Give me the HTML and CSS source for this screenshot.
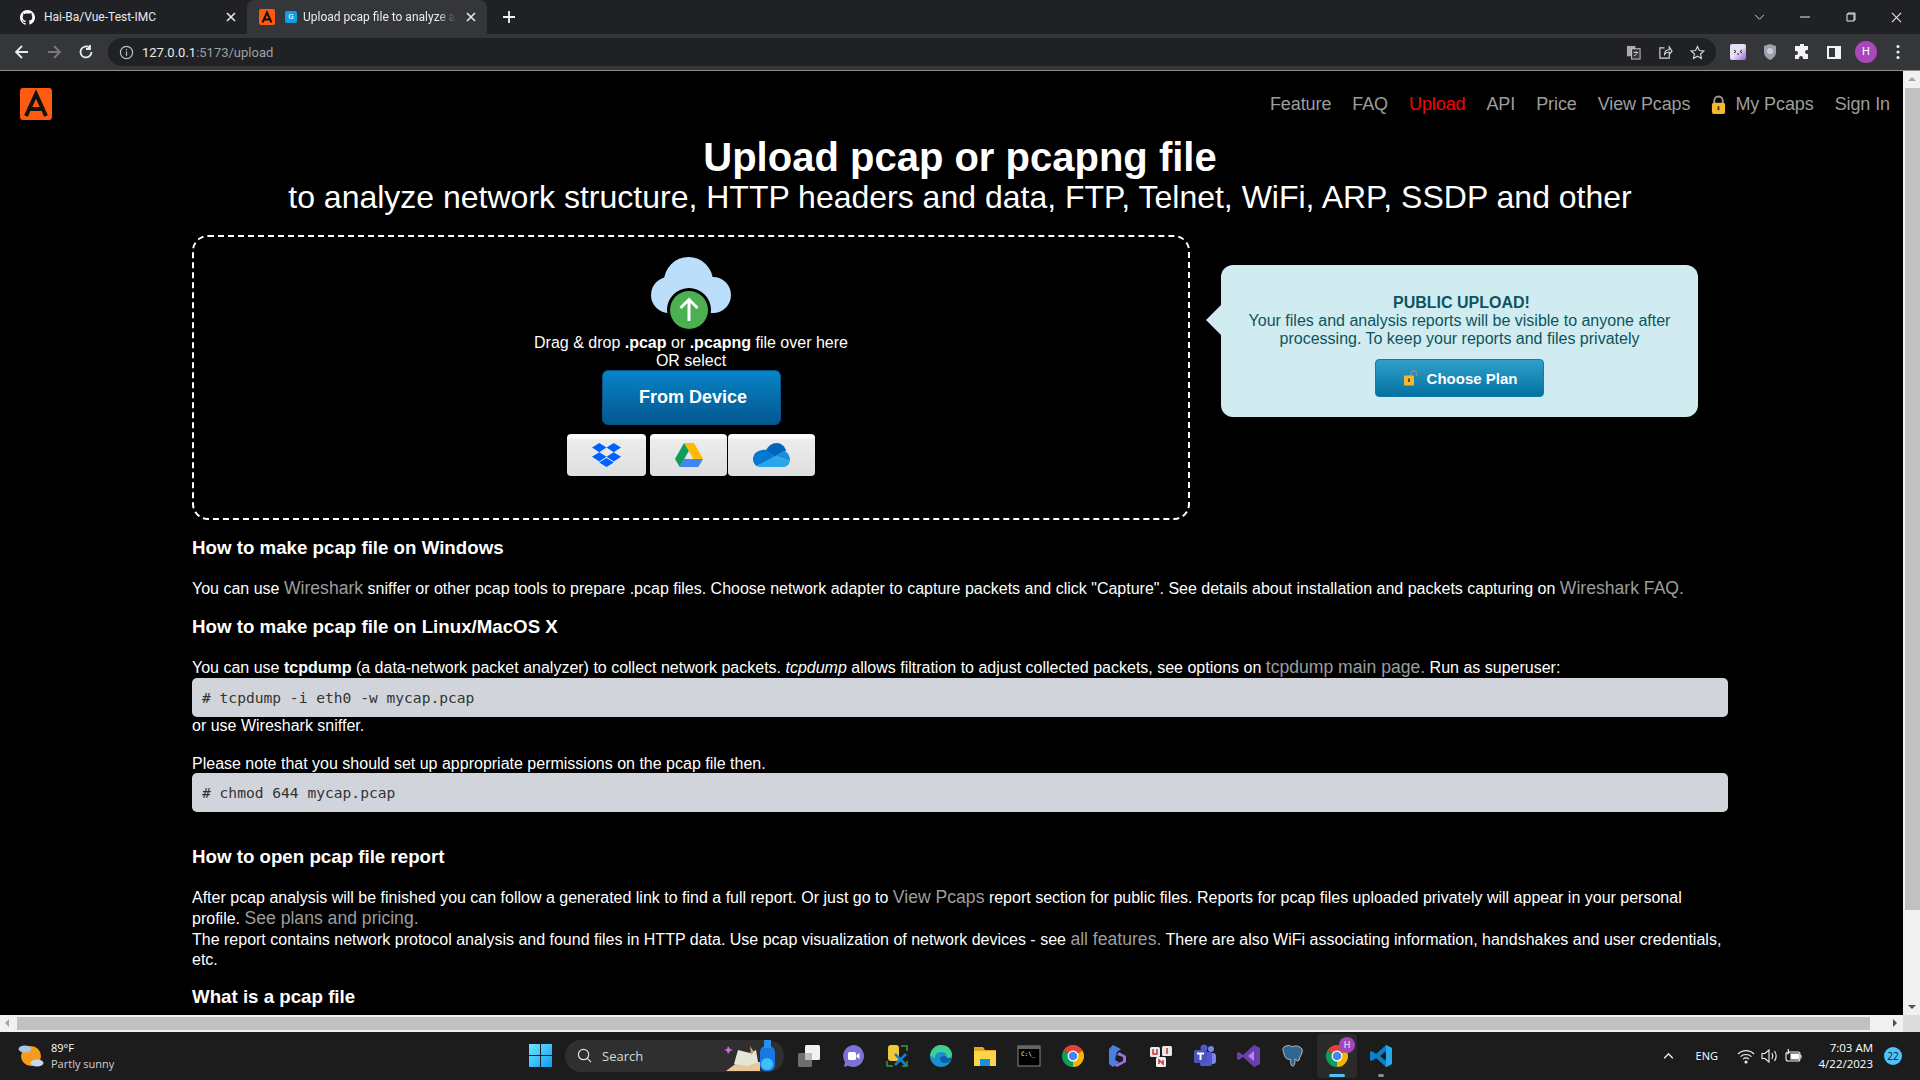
FILE: index.html
```html
<!DOCTYPE html>
<html lang="en">
<head>
<meta charset="utf-8">
<title>Upload pcap file to analyze</title>
<link rel="stylesheet" href="styles.css">
</head>
<body>
<div class="screen">
  <div class="tabbar">
    <div class="tab">
      <svg class="fav-gh" viewBox="0 0 16 16"><path fill="#fff" d="M8 0C3.6 0 0 3.6 0 8c0 3.5 2.3 6.5 5.5 7.6.4.1.5-.2.5-.4v-1.4c-2.2.5-2.7-1-2.7-1-.4-.9-.9-1.200-.9-1.200-.7-.5.100-.5.100-.5.800.1 1.200.8 1.200.8.700 1.200 1.900.9 2.300.7.100-.5.300-.9.500-1.100-1.800-.2-3.600-.9-3.600-4 0-.9.300-1.600.800-2.100-.1-.2-.4-1 .1-2.100 0 0 .7-.2 2.200.8.600-.2 1.300-.3 2-.3s1.400.1 2 .3c1.500-1 2.200-.8 2.200-.8.400 1.100.2 1.900.1 2.100.5.600.8 1.300.8 2.100 0 3.100-1.900 3.700-3.700 3.900.3.300.6.800.6 1.500v2.200c0 .2.100.5.600.4C13.700 14.500 16 11.500 16 8c0-4.400-3.600-8-8-8z"/></svg>
      <span class="tab-title">Hai-Ba/Vue-Test-IMC</span>
      <svg class="tab-x" viewBox="0 0 10 10"><path d="M1 1l8 8M9 1l-8 8"/></svg>
    </div>
    <div class="tab tab-active">
      <svg class="fav-a" viewBox="0 0 32 32"><rect width="32" height="32" rx="4" fill="#ff5a0f"/><path d="M7 27 16 7l9 20M10.500 21h11" fill="none" stroke="#111" stroke-width="4"/></svg>
      <span class="fav-blue">G</span>
      <span class="tab-title tab-fade">Upload pcap file to analyze a</span>
      <svg class="tab-x" viewBox="0 0 10 10"><path d="M1 1l8 8M9 1l-8 8"/></svg>
    </div>
    <svg class="tab-plus" viewBox="0 0 12 12"><path d="M6 0v12M0 6h12"/></svg>
    <div class="win-ctrl">
      <svg class="wc wc-v" viewBox="0 0 12 8"><path d="M1 1l5 5 5-5"/></svg>
      <svg class="wc wc-min" viewBox="0 0 10 10"><path d="M0 5h10"/></svg>
      <svg class="wc wc-max" viewBox="0 0 10 10"><path d="M2 2V1h7v7H8M1 2h7v7H1z"/></svg>
      <svg class="wc wc-close" viewBox="0 0 12 12"><path d="M1 1l10 10M11 1L1 11"/></svg>
    </div>
  </div>
  <div class="toolbar">
    <svg class="tb-ic" viewBox="0 0 16 16"><path d="M14 8H2M8 2L2 8l6 6"/></svg>
    <svg class="tb-ic tb-dim" viewBox="0 0 16 16"><path d="M2 8h12M8 2l6 6-6 6"/></svg>
    <svg class="tb-ic" viewBox="0 0 16 16"><path d="M13.500 8A5.500 5.500 0 1 1 11.500 3.700M12 1v4H8"/></svg>
    <div class="omnibox">
      <svg class="info" viewBox="0 0 16 16"><circle cx="8" cy="8" r="6.500"/><path d="M8 7v4.500M8 4.200v1.300"/></svg>
      <span class="url"><b>127.0.0.1</b>:5173/upload</span>
      <div class="omni-right">
        <svg class="om-ic" viewBox="0 0 16 16"><rect x="1" y="1" width="9" height="11" fill="#aaa"/><rect x="6" y="4" width="9" height="11" fill="#35363a" stroke="#ccc"/><path d="M8 8h5M10.500 6.500V8M12 8c-.5 2-2 3-3.500 3.500" stroke="#ccc" fill="none"/></svg>
        <svg class="om-ic om-stroke" viewBox="0 0 16 16"><path d="M7 3H2v11h10V9M7 10c0-3 2-5 5-5V2l3 4.500L12 10V7.500c-2 0-4 1-5 2.500z"/></svg>
        <svg class="om-ic om-stroke" viewBox="0 0 16 16"><path d="M8 1.500l2 4.400 4.800.5-3.600 3.200 1 4.700L8 11.900l-4.200 2.400 1-4.700L1.200 6.400 6 5.900z"/></svg>
      </div>
    </div>
    <div class="ext">
      <svg class="ext-ic" viewBox="0 0 16 16"><defs><linearGradient id="extg" x1="0" y1="0" x2="1" y2="1"><stop offset="0.500" stop-color="#e4e0f5"/><stop offset="1" stop-color="#9a5fe0"/></linearGradient></defs><rect width="16" height="16" rx="2" fill="url(#extg)"/><path d="M4 6l2 1.500L4 9M12 6l-2 1.500L12 9M7 10h2" stroke="#222" fill="none"/></svg>
      <svg class="ext-ic" viewBox="0 0 16 16"><path d="M8 0l6 2v6c0 4-3 6.500-6 8-3-1.500-6-4-6-8V2z" fill="#9aa3ad"/><circle cx="8" cy="7" r="3" fill="#c9d0d6"/></svg>
      <svg class="ext-ic" viewBox="0 0 16 16"><path fill="#f1f3f4" d="M6 1a2 2 0 0 1 4 0v1h4v4h-1a2 2 0 0 0 0 4h1v5H9v-1a2 2 0 0 0-4 0v1H1v-4h1a2 2 0 0 0 0-4H1V2h5z"/></svg>
      <svg class="ext-ic" viewBox="0 0 16 16"><path fill="#f1f3f4" d="M1 2h14v13H1zM3 4v9h6V4z"/></svg>
      <span class="avatar">H</span>
      <svg class="ext-ic" viewBox="0 0 16 16"><circle cx="8" cy="2.500" r="1.600" fill="#e8eaed"/><circle cx="8" cy="8" r="1.600" fill="#e8eaed"/><circle cx="8" cy="13.500" r="1.600" fill="#e8eaed"/></svg>
    </div>
  </div>

  <div class="viewport">
    <div class="page">
      <nav class="nav">
        <svg class="logo" viewBox="0 0 32 32"><rect width="32" height="32" rx="3" fill="#ff5a0f"/><path d="M6 28 16 6l10 22M10 21h12" fill="none" stroke="#111" stroke-width="4"/></svg>
        <ul class="menu">
          <li><a>Feature</a></li>
          <li><a>FAQ</a></li>
          <li><a class="on">Upload</a></li>
          <li><a>API</a></li>
          <li><a>Price</a></li>
          <li><a>View Pcaps</a></li>
          <li><a class="with-lock"><svg class="lock" viewBox="0 0 16 20"><path d="M3.500 9V6a4.500 4.500 0 0 1 9 0v3" fill="none" stroke="#9a9a9a" stroke-width="2"/><rect x="1" y="8" width="14" height="12" rx="2" fill="#f5b82e"/><rect x="7" y="12" width="2" height="4" fill="#333"/></svg>My Pcaps</a></li>
          <li><a>Sign In</a></li>
        </ul>
      </nav>
      <main class="content">
        <h1 class="title">Upload pcap or pcapng file</h1>
        <h2 class="subtitle">to analyze network structure, HTTP headers and data, FTP, Telnet, WiFi, ARP, SSDP and other</h2>
        <div class="upload-row">
          <div class="dropzone">
            <svg class="cloud" viewBox="0 0 80 73"><g fill="#bbdefb"><circle cx="37.500" cy="24.500" r="24.500"/><circle cx="18" cy="38" r="18"/><circle cx="62" cy="38" r="18"/><rect x="18" y="38" width="44" height="18"/></g><circle cx="38" cy="53" r="22" fill="#000"/><circle cx="38" cy="53" r="19" fill="#4caf50"/><path d="M38 64V43M29.500 51l8.500-8.500 8.500 8.500" fill="none" stroke="#fff" stroke-width="3"/></svg>
            <div class="drop-text drop-first">Drag &amp; drop <b>.pcap</b> or <b>.pcapng</b> file over here</div>
            <div class="drop-text">OR select</div>
            <button class="btn-device">From Device</button>
            <div class="sources">
              <button class="src src-a"><svg class="ic-db" viewBox="0 0 29 24"><path fill="#0061ff" d="M7.250 0l7.250 4.600-7.250 4.600L0 4.600zM21.750 0L29 4.600l-7.250 4.600-7.250-4.600zM7.250 9.200l7.250 4.600-7.250 4.600L0 13.800zM21.750 9.200L29 13.800l-7.250 4.600-7.250-4.600zM14.500 15l7.250 4.600L14.500 24l-7.250-4.400z"/></svg></button>
              <button class="src src-b"><svg class="ic-gd" viewBox="0 0 28 24"><path fill="#ffba00" d="M9 0h10l9 16h-9.500z"/><path fill="#0f9d58" d="M9 0l4.800 8-9.100 16L0 16z"/><path fill="#4285f4" d="M9 16h19l-4.700 8H4.700z"/></svg></button>
              <button class="src src-c"><svg class="ic-od" viewBox="0 0 37 24"><path fill="#0364b8" d="M13 7.500C15 3 19 0 23.500 0 28 0 32 3 33 8L22 14z"/><path fill="#0078d4" d="M14 7C8 5.500 0 9 0 16c0 3 1.500 5.500 3.500 7L22 14.500z"/><path fill="#1490df" d="M22 13l8-5c4 0 7 4 7 10z"/><path fill="#28a8ea" d="M3.500 23L22 13l15 5c-1 3.500-3 6-7 6H8c-2 0-3.500-.3-4.500-1z"/></svg></button>
            </div>
          </div>
          <aside class="callout">
            <div class="call-head">PUBLIC UPLOAD!</div>
            <div>Your files and analysis reports will be visible to anyone after processing. To keep your reports and files privately</div>
            <button class="btn-plan"><svg class="lock-open" viewBox="0 0 14 16"><path d="M7 6V3.500a2.800 2.800 0 0 1 5.600 0V6" fill="none" stroke="#8a8a8a" stroke-width="1.500"/><rect y="5.500" width="10" height="10" rx="1" fill="#f5b82e"/><rect x="4.200" y="8.500" width="1.600" height="3.500" fill="#333"/></svg>Choose Plan</button>
          </aside>
        </div>
        <h3 class="sec sec-1">How to make pcap file on Windows</h3>
        <p class="para p-1">You can use <a>Wireshark</a> sniffer or other pcap tools to prepare .pcap files. Choose network adapter to capture packets and click "Capture". See details about installation and packets capturing on <a>Wireshark FAQ.</a></p>
        <h3 class="sec sec-2">How to make pcap file on Linux/MacOS X</h3>
        <p class="para p-2">You can use <b>tcpdump</b> (a data-network packet analyzer) to collect network packets. <i>tcpdump</i> allows filtration to adjust collected packets, see options on <a>tcpdump main page.</a> Run as superuser:</p>
        <pre class="code"># tcpdump -i eth0 -w mycap.pcap</pre>
        <p class="para p-3">or use Wireshark sniffer.</p>
        <p class="para p-4">Please note that you should set up appropriate permissions on the pcap file then.</p>
        <pre class="code"># chmod 644 mycap.pcap</pre>
        <h3 class="sec sec-3">How to open pcap file report</h3>
        <p class="para p-5">After pcap analysis will be finished you can follow a generated link to find a full report. Or just go to <a>View Pcaps</a> report section for public files. Reports for pcap files uploaded privately will appear in your personal profile. <a>See plans and pricing.</a><br>The report contains network protocol analysis and found files in HTTP data. Use pcap visualization of network devices - see <a>all features.</a> There are also WiFi associating information, handshakes and user credentials, etc.</p>
        <h3 class="sec sec-4">What is a pcap file</h3>
      </main>
    </div>
    <div class="vscroll">
      <span class="arrow-up"></span>
      <span class="v-thumb"></span>
      <span class="arrow-down"></span>
    </div>
  </div>
  <div class="hscroll">
    <span class="arrow-left"></span>
    <span class="h-thumb"></span>
    <span class="arrow-right"></span>
    <span class="corner"></span>
  </div>

  <footer class="taskbar">
    <div class="weather">
      <svg class="wx" viewBox="0 0 26 26"><circle cx="13" cy="13" r="10" fill="#f39a1f"/><ellipse cx="7" cy="6" rx="6.500" ry="3.500" fill="#a9c6e8"/><ellipse cx="19" cy="20" rx="6.500" ry="3.500" fill="#c5d8ee"/></svg>
      <div class="wx-text"><div class="wx-t">89°F</div><div class="wx-d">Partly sunny</div></div>
    </div>
    <svg class="start" viewBox="0 0 24 24"><defs><linearGradient id="wing" x1="0" y1="0" x2="1" y2="1"><stop offset="0" stop-color="#6ee6ff"/><stop offset="1" stop-color="#0f9bf5"/></linearGradient></defs><path fill="url(#wing)" d="M0 0h11.500v11.500H0zM12.500 0H24v11.500H12.500zM0 12.500h11.500V24H0zM12.500 12.500H24V24H12.500z"/></svg>
    <div class="search">
      <svg class="s-ic" viewBox="0 0 16 16"><circle cx="7" cy="7" r="5.500"/><path d="M11 11l4 4"/></svg>
      <span>Search</span>
      <svg class="s-art" viewBox="0 0 56 34"><path d="M2 33L14 24h22v9z" fill="#e8c79a"/><path d="M10 26L14 12l12 3 6-3 2 12-10 4z" fill="#e6e6d8"/><path d="M26 8l4 6-3 3z" fill="#d0a060"/><rect x="36" y="8" width="15" height="25" rx="6" fill="#1a78e6"/><rect x="40" y="2" width="7" height="8" fill="#2a90f0"/><circle cx="43" cy="26" r="6" fill="#3cc0f5"/><path d="M4 8l2 3 3 1-3 1-2 3-1-3-3-1 3-1z" fill="#d070e0"/></svg>
    </div>
    <div class="apps">
      <span class="app"><svg class="a-ic" viewBox="0 0 24 24"><rect x="8" y="1" width="15" height="15" rx="1.500" fill="#f2f2f2"/><rect x="1" y="9" width="14" height="14" rx="1.500" fill="#6e6e6e"/><rect x="8" y="9" width="7" height="7" fill="#bdbdbd"/></svg></span>
      <span class="app"><svg class="a-ic" viewBox="0 0 24 24"><path fill="#7b73d6" d="M12 1a11 11 0 1 1-5 20.800L3 23l1-5A11 11 0 0 1 12 1z"/><rect x="7" y="8" width="8" height="8" rx="1.500" fill="#fff"/><path d="M15.500 11l3-2v6l-3-2z" fill="#fff"/></svg></span>
      <span class="app"><svg class="a-ic" viewBox="0 0 24 24"><rect x="3" y="1" width="11" height="16" rx="3" fill="#f0c93a"/><path d="M10 10l11 11M21 10L10 21" stroke="#1a7fc8" stroke-width="2.500"/><path d="M16 2h6v5M2 17v5h6M22 17v5h-5" fill="none" stroke="#3a9a3a" stroke-width="1.500"/></svg></span>
      <span class="app"><svg class="a-ic" viewBox="0 0 24 24"><circle cx="12" cy="12" r="11" fill="#1b8fd0"/><path d="M23 12c0 4-3 7-7 7-3 0-5-2-5-4s2-3 4-3 3 1 3 2h5z" fill="#0b5ea8"/><path d="M1 12C2 5 7 1 12 1c6 0 11 4 11 10 0 2-2 3-5 3 0-4-2-6-6-6-5 0-6 4-6 6" fill="#3ecf8e"/></svg></span>
      <span class="app"><svg class="a-ic" viewBox="0 0 24 24"><path fill="#e0a81c" d="M1 3h9l2 3h11v16H1z"/><path fill="#fbd448" d="M1 7h22v15H1z"/><rect x="7" y="15" width="10" height="7" fill="#1a8fdc"/></svg></span>
      <span class="app"><svg class="a-ic" viewBox="0 0 24 24"><rect x="1" y="2" width="22" height="20" fill="#000" stroke="#888"/><rect x="1" y="2" width="22" height="3" fill="#666"/><text class="cmd" x="4" y="12">C:\_</text></svg></span>
      <span class="app"><svg class="a-ic" viewBox="0 0 24 24"><path fill="#db4437" d="M12 12L2.470 6.500A11 11 0 0 1 21.530 6.500z"/><path fill="#f4b400" d="M12 12l9.530-5.500A11 11 0 0 1 12 23z"/><path fill="#0f9d58" d="M12 12v11A11 11 0 0 1 2.470 6.500z"/><circle cx="12" cy="12" r="5.500" fill="#fff"/><circle cx="12" cy="12" r="4.300" fill="#4285f4"/></svg></span>
      <span class="app"><svg class="a-ic" viewBox="0 0 24 24"><path fill="#4a7fe0" d="M8 1l8 4-4 3-2 8 4 2-6 5-4-3V5z"/><path fill="#9f6fe0" d="M14 8l7 4v6l-9 5-3-2 9-4v-4l-6-2z"/></svg></span>
      <span class="app"><svg class="a-ic" viewBox="0 0 24 24"><rect x="1" y="3" width="10" height="10" rx="1.500" fill="#e8e8e8"/><rect x="13" y="2" width="10" height="10" rx="1.500" fill="#e8e8e8"/><rect x="7" y="13" width="10" height="10" rx="1.500" fill="#f2f2f2"/><path d="M4 5v5h4V5M18 4v6M10 20v-4l4 4v-4" fill="none" stroke="#c33" stroke-width="1.500"/></svg></span>
      <span class="app"><svg class="a-ic" viewBox="0 0 24 24"><circle cx="18" cy="5" r="3" fill="#7b83eb"/><rect x="14" y="9" width="9" height="11" rx="3" fill="#7b83eb"/><circle cx="11" cy="4" r="3.500" fill="#5059c9"/><rect x="7" y="8" width="12" height="14" rx="2" fill="#5059c9"/><rect x="1" y="6" width="13" height="13" rx="1.500" fill="#4b53bc"/><path d="M4 9.500h7M7.500 9.500V16" stroke="#fff" stroke-width="2"/></svg></span>
      <span class="app"><svg class="a-ic" viewBox="0 0 24 24"><path fill="#6a3fb0" d="M17 1l6 3v16l-6 3L6 13l-4 3-2-1V9l2-1 4 3z"/><path fill="#b18bea" d="M17 7v10l-6-5z"/></svg></span>
      <span class="app"><svg class="a-ic" viewBox="0 0 24 24"><path fill="#2f6792" stroke="#ddd" stroke-width=".8" d="M3 3c3-2 6-2 8 0 3-2 8-1 10 2 1 3-1 6-2 8-1 1 0 3-2 4-2 0-2-2-3-2 0 3 0 7-2 7-3 0-2-4-3-7-3 1-5-1-6-5S1 5 3 3z"/></svg></span>
      <span class="app app-active"><svg class="a-ic" viewBox="0 0 24 24"><path fill="#db4437" d="M12 12L2.470 6.500A11 11 0 0 1 21.530 6.500z"/><path fill="#f4b400" d="M12 12l9.530-5.500A11 11 0 0 1 12 23z"/><path fill="#0f9d58" d="M12 12v11A11 11 0 0 1 2.470 6.500z"/><circle cx="12" cy="12" r="5.500" fill="#fff"/><circle cx="12" cy="12" r="4.300" fill="#4285f4"/></svg><span class="app-badge">H</span><span class="run-bar"></span></span>
      <span class="app"><svg class="a-ic" viewBox="0 0 24 24"><path fill="#0a7fcb" d="M17 1l6 3v16l-6 3-10-9-4 3-2-1V8l2-1 4 3z"/><path fill="#25a7ea" d="M17 1l6 3v16l-6 3z"/><path fill="#1c1c1c" d="M17 7v10l-6-5z"/></svg><span class="run-dot"></span></span>
    </div>
    <div class="tray">
      <svg class="tr-chev" viewBox="0 0 12 7"><path d="M1 6l5-5 5 5"/></svg>
      <span class="eng">ENG</span>
      <svg class="tr-ic" viewBox="0 0 18 16"><path d="M1 6c4.500-4.500 11.500-4.500 16 0M3.500 8.700c3-3 8-3 11 0M6 11.200c1.800-1.600 4.200-1.600 6 0"/><circle cx="9" cy="14" r="1" fill="#fff"/></svg>
      <svg class="tr-ic" viewBox="0 0 18 16"><path d="M1 5.500h3L8 2v12l-4-3.500H1zM11 5c1 2 1 4 0 6M13.500 3c2 3 2 7 0 10"/></svg>
      <svg class="tr-ic" viewBox="0 0 18 16"><rect x="1" y="4" width="14" height="9" rx="2"/><path d="M16 7v3"/><rect x="6" y="6" width="8" height="5" fill="#fff"/><path d="M3 1l1 4-2 1"/></svg>
      <div class="clock"><div>7:03 AM</div><div>4/22/2023</div></div>
      <span class="notif">22</span>
    </div>
  </footer>
</div>
</body>
</html>
```

FILE: styles.css
```css
* { box-sizing: border-box; }
html, body { margin: 0; padding: 0; height: 100%; overflow: hidden; background: #000; }
body { font-family: "Liberation Sans", Arial, sans-serif; font-size: 16px; color: #fff; }
.screen { display: flex; flex-direction: column; height: 1080px; width: 1920px; }

/* browser chrome */
.tabbar { height: 34px; background: #202124; display: flex; align-items: flex-end; font-family: Roboto, sans-serif; font-size: 12px; color: #e8eaed; }
.tab { width: 247px; height: 34px; display: flex; align-items: center; padding-left: 20px; }
.tab-active { width: 240px; height: 34px; background: #35363a; border-radius: 8px 8px 0 0; padding-left: 12px; }
.fav-gh { width: 15px; height: 15px; margin-right: 9px; }
.fav-a { width: 16px; height: 16px; margin-right: 10px; }
.fav-blue { width: 12px; height: 12px; margin-right: 6px; border-radius: 2px; background: #0f9fe8; color: #fff; font-size: 8px; line-height: 12px; text-align: center; }
.tab-title { flex: 1; white-space: nowrap; overflow: hidden; }
.tab-fade { color: #e8eaed; -webkit-mask-image: linear-gradient(90deg, #000 88%, transparent); mask-image: linear-gradient(90deg, #000 88%, transparent); }
.tab-x { width: 10px; height: 10px; margin: 0 11px 0 10px; fill: none; stroke: #e8eaed; stroke-width: 1.600; flex: none; }
.tab-plus { width: 12px; height: 12px; margin: 0 0 11px 16px; fill: none; stroke: #f1f3f4; stroke-width: 1.800; }
.win-ctrl { margin-left: auto; height: 34px; display: flex; align-items: center; }
.wc { fill: none; stroke: #e8eaed; stroke-width: 1; flex: none; }
.wc-v { width: 11px; height: 7px; margin-right: 35px; }
.wc-min { width: 10px; height: 10px; margin-right: 36px; }
.wc-max { width: 10px; height: 10px; margin-right: 35px; }
.wc-close { width: 11px; height: 11px; margin-right: 18px; stroke-width: 1.200; }

.toolbar { height: 37px; background: #35363a; border-bottom: 1px solid #8d8e90; display: flex; align-items: center; padding-left: 14px; }
.tb-ic { width: 16px; height: 16px; margin-right: 16px; fill: none; stroke: #e8eaed; stroke-width: 1.800; flex: none; }
.tb-dim { stroke: #77787b; }
.tb-ic:nth-child(3) { margin-right: 14px; }
.omnibox { width: 1608px; height: 28px; background: #202124; border-radius: 14px; display: flex; align-items: center; padding: 0 11px; font-family: Roboto, sans-serif; font-size: 13px; color: #9aa0a6; }
.info { width: 15px; height: 15px; fill: none; stroke: #bdc1c6; stroke-width: 1.300; margin-right: 8px; }
.url b { font-weight: 400; color: #e8eaed; }
.omni-right { margin-left: auto; display: flex; gap: 17px; align-items: center; }
.om-ic { width: 15px; height: 15px; }
.om-stroke { fill: none; stroke: #d5d7da; stroke-width: 1.200; }
.ext { display: flex; align-items: center; margin-left: 14px; gap: 16px; }
.ext-ic { width: 16px; height: 16px; flex: none; }
.avatar { width: 22px; height: 22px; margin: 0 -3px; border-radius: 50%; background: #ab47bc; color: #fff; font-size: 11px; line-height: 22px; text-align: center; font-family: Roboto, sans-serif; }

/* page */
.viewport { flex: 1; display: flex; min-height: 0; }
.page { width: 1903px; overflow: hidden; background: #000; flex: none; }
.nav { height: 50px; display: flex; align-items: center; justify-content: space-between; padding: 16px 13px 0 20px; }
.logo { width: 32px; height: 32px; }
.menu { list-style: none; display: flex; margin: 0; padding: 0; font-size: 18px; letter-spacing: -0.1px; color: #9d9d9d; }
.menu li + li { margin-left: 21px; }
.menu .on { color: #f00; }
.with-lock { display: flex; align-items: center; }
.lock { width: 15px; height: 19px; margin-right: 9px; }
.content { width: 1536px; margin-left: 192px; }
.title { margin: 14px 0 0; font-size: 40px; line-height: 44px; font-weight: 700; text-align: center; }
.subtitle { margin: -1px 0 0; font-size: 32px; line-height: 38px; font-weight: 400; text-align: center; }
.upload-row { display: flex; align-items: flex-start; margin-top: 19px; }
.dropzone { width: 998px; height: 285px; border: 2px dashed #fff; border-radius: 16px; display: flex; flex-direction: column; align-items: center; padding-top: 20px; }
.cloud { width: 80px; height: 73px; margin-left: -1px; display: block; }
.drop-text { line-height: 18px; text-align: center; }
.drop-first { margin-top: 4px; }
.btn-device { width: 179px; height: 55px; margin-top: 0; padding-left: 10px; border: 1px solid #04558f; border-radius: 6px; background: linear-gradient(#0784c6, #04578f); color: #fff; font: 700 18px "Liberation Sans", Arial, sans-serif; }
.sources { display: flex; margin-top: 9px; }
.src { height: 42px; padding: 0; border: 0; border-radius: 4px; background: linear-gradient(#f5f5f5 0, #fff 3px, #ececec 6px, #dfdfdf); display: flex; align-items: center; justify-content: center; }
.src-a { width: 79px; margin-right: 4px; }
.src-b { width: 77px; margin-right: 1px; }
.src-c { width: 87px; }
.ic-db { width: 29px; height: 24px; }
.ic-gd { width: 28px; height: 24px; }
.ic-od { width: 37px; height: 24px; }
.callout { position: relative; width: 477px; height: 152px; margin: 30px 0 0 31px; padding: 29px 25px 0; background: #d1ecf1; border-radius: 12px; color: #0c5460; text-align: center; line-height: 18px; }
.callout::before { content: ""; position: absolute; left: -15px; top: 40px; border: 15px solid transparent; border-left: 0; border-right-color: #d1ecf1; }
.call-head { font-weight: 700; padding-left: 4px; }
.btn-plan { display: flex; align-items: center; justify-content: center; width: 169px; height: 38px; margin: 11px auto 0; padding-left: 8px; border: 1px solid #0b7eae; border-radius: 4px; background: linear-gradient(#2f9fcb, #04729e); color: #fff; font: 700 15px "Liberation Sans", Arial, sans-serif; }
.lock-open { width: 14px; height: 16px; margin-right: 9px; }
.sec { margin: 0; font-size: 18.720px; line-height: 24px; font-weight: 700; }
.para { margin: 0; line-height: 20px; }
.para a { color: #9d9d9d; font-size: 17.600px; }
.sec-1 { margin-top: 16px; }
.p-1 { margin-top: 18px; }
.sec-2 { margin-top: 16px; }
.p-2 { margin-top: 18px; }
.code { margin: 0; height: 39px; padding: 0 10px; background: #d1d5db; border-radius: 5px; color: #333; font: 14.600px/39px "DejaVu Sans Mono", monospace; }
.p-3 { line-height: 17px; }
.p-4 { margin-top: 20px; line-height: 19px; }
.sec-3 { margin-top: 33px; }
.p-5 { margin-top: 18px; }
.sec-4 { margin-top: 15px; }

.vscroll { width: 17px; background: #f1f1f1; position: relative; flex: none; }
.v-thumb { position: absolute; left: 2px; right: 0; top: 17px; height: 822px; background: #c1c1c1; }
.arrow-up, .arrow-down, .arrow-left, .arrow-right { position: absolute; width: 0; height: 0; border: 4px solid transparent; }
.arrow-up { left: 5px; top: 6px; border-bottom-color: #a3a3a3; border-top: 0; }
.arrow-down { left: 5px; bottom: 6px; border-top-color: #505050; border-bottom: 0; }

.hscroll { height: 17px; background: #f1f1f1; position: relative; flex: none; }
.h-thumb { position: absolute; left: 17px; top: 2px; bottom: 2px; width: 1853px; background: #c1c1c1; }
.arrow-left { left: 5px; top: 4px; border-right-color: #a3a3a3; border-left: 0; }
.arrow-right { left: 1893px; top: 4px; border-left-color: #505050; border-right: 0; }
.corner { position: absolute; left: 1903px; top: 0; width: 17px; height: 17px; background: #dcdcdc; }

/* taskbar */
.taskbar { height: 48px; padding-bottom: 1px; background: #1c1c1c; display: flex; align-items: center; font-family: "Open Sans", sans-serif; color: #fff; flex: none; }
.weather { width: 529px; display: flex; align-items: center; padding-left: 18px; flex: none; }
.wx { width: 26px; height: 26px; margin-right: 7px; }
.wx-text { font-size: 11px; line-height: 16px; }
.wx-d { color: #d0d0d0; }
.start { width: 23px; height: 23px; flex: none; }
.search { width: 219px; height: 32px; margin-left: 13px; background: #2f2f2f; border-radius: 16px; display: flex; align-items: center; padding-left: 12px; font-size: 13px; color: #d8d8d8; position: relative; flex: none; }
.s-ic { width: 15px; height: 15px; fill: none; stroke: #e0e0e0; stroke-width: 1.300; margin-right: 10px; }
.s-art { position: absolute; right: 4px; bottom: 0; width: 56px; height: 34px; }
.apps { display: flex; margin-left: 3px; flex: none; }
.app { width: 44px; height: 44px; display: flex; align-items: center; justify-content: center; position: relative; }
.a-ic { width: 24px; height: 24px; }
.cmd { font: 6px "DejaVu Sans Mono", monospace; fill: #fff; }
.app-active { background: #2a2a2a; border-radius: 4px; width: 40px; margin: 0 2px; }
.app-badge { position: absolute; right: 2px; top: 3px; width: 16px; height: 16px; border-radius: 50%; background: #a347ba; font-size: 9px; line-height: 16px; text-align: center; }
.run-bar { position: absolute; left: 12px; bottom: 1px; width: 16px; height: 3px; border-radius: 2px; background: #4cc2ff; }
.run-dot { position: absolute; left: 19px; bottom: 1px; width: 6px; height: 3px; border-radius: 2px; background: #8a8a8a; }
.tray { margin-left: auto; display: flex; align-items: center; flex: none; }
.tr-chev { width: 11px; height: 6px; fill: none; stroke: #f2f2f2; stroke-width: 1.600; margin-right: 22px; }
.eng { font-size: 11px; margin-right: 19px; }
.tr-ic { width: 18px; height: 16px; fill: none; stroke: #f2f2f2; stroke-width: 1.100; margin-right: 6px; }
.clock { width: 66px; margin-left: -2px; font-size: 11.500px; line-height: 16px; text-align: right; white-space: nowrap; }
.notif { width: 18px; height: 18px; margin: 0 18px 0 11px; border-radius: 50%; background: #4cc2ff; color: #111; font-size: 10px; line-height: 18px; text-align: center; }
```
